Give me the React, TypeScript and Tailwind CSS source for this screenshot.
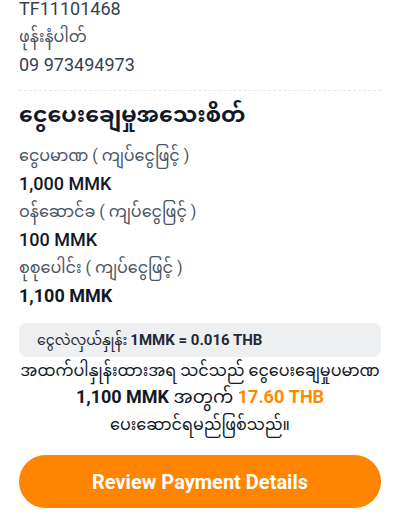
const font = { fontFamily: 'Roboto, "Noto Sans", "Noto Sans Myanmar", sans-serif' }

type Row = { label: string; value: string; strong?: boolean }

const rows: Row[] = [
  { label: 'ငွေပမာဏ ( ကျပ်ငွေဖြင့် )', value: '1,000 MMK' },
  { label: 'ဝန်ဆောင်ခ ( ကျပ်ငွေဖြင့် )', value: '100 MMK' },
  { label: 'စုစုပေါင်း ( ကျပ်ငွေဖြင့် )', value: '1,100 MMK', strong: true },
]

export default function App() {
  return (
    <div className="h-[520px] w-[400px] overflow-hidden bg-white" style={font}>
      <div className="-mt-[5px] px-[19px]">
        <p className="text-[18px] leading-[28px] text-[#374151]">TF11101468</p>
        <p className="text-[16px] leading-[28px] text-[#4b5563]">ဖုန်းနံပါတ်</p>
        <p className="text-[18px] leading-[28px] text-[#374151]">09 973494973</p>

        <div className="mt-[11px] border-t border-dashed border-[#e5e7eb]" />

        <h2 className="mt-[9px] text-[22px] font-bold leading-[30px] text-[#111827]">ငွေပေးချေမှုအသေးစိတ်</h2>

        <div className="mt-[12px] flex flex-col">
          {rows.map((row) => (
            <div key={row.label}>
              <p className="text-[16px] leading-[28px] text-[#4b5563]">{row.label}</p>
              <p
                className={`text-[18px] leading-[28px] text-[#111827] ${
                  row.strong ? 'font-bold' : 'font-medium'
                }`}
              >
                {row.value}
              </p>
            </div>
          ))}
        </div>

        <div className="mt-[13px] flex h-[34px] items-center rounded-[8px] bg-[#eeeff1] px-[18px] text-[14px] text-[#1f2937]">
          <span>ငွေလဲလှယ်နှုန်း</span>
          <span className="ml-[3px] text-[15px] font-bold">1MMK = 0.016 THB</span>
        </div>

        <div className="mt-[1px] text-center text-[#111827]">
          <p className="text-[16px] leading-[26px]">အထက်ပါနှုန်းထားအရ သင်သည် ငွေပေးချေမှုပမာဏ</p>
          <p className="text-[18px] font-bold leading-[26px]">
            1,100 MMK <span className="font-normal">အတွက်</span>{' '}
            <span className="text-[#ff8a00]">17.60 THB</span>
          </p>
          <p className="text-[16px] leading-[30px]">ပေးဆောင်ရမည်ဖြစ်သည်။</p>
        </div>

        <button
          className="mt-[15px] flex h-[53px] w-full items-center justify-center rounded-full bg-[#ff8400] text-[20px] font-bold text-white"
          type="button"
        >
          Review Payment Details
        </button>
      </div>
    </div>
  )
}
